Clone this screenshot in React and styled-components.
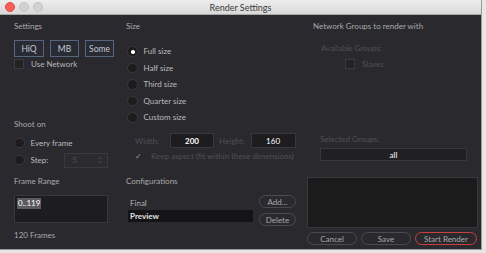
import React from 'react'
import styled, { createGlobalStyle } from 'styled-components'

const Global = createGlobalStyle`
  html, body { margin: 0; padding: 0; background: #e6e6e6; }
  body { font-family: Lato, "Liberation Sans", sans-serif; }
`

const Window = styled.div`
  width: 482px;
  height: 250px;
  background: #2a2a2e;
  border-right: 1px solid #9a9a9a;
  border-bottom: 1px solid #9a9a9a;
  box-sizing: border-box;
  display: flex;
  flex-direction: column;
  overflow: hidden;
`

const TitleBar = styled.div`
  height: 15px;
  flex: none;
  background: linear-gradient(#ededed, #d8d8d8);
  border-bottom: 1px solid #a9a9a9;
  box-sizing: border-box;
  display: flex;
  align-items: center;
  padding-left: 5px;
  position: relative;
`

const Light = styled.span`
  width: 8px;
  height: 8px;
  border-radius: 50%;
  margin-right: 4px;
  background: ${p => (p.red ? '#fb5f57' : '#d2d2d2')};
  border: 0.5px solid ${p => (p.red ? '#de4840' : '#c2c2c2')};
`

const Title = styled.div`
  position: absolute;
  left: 0;
  right: 0;
  text-align: center;
  font-size: 9px;
  color: #3c3c3c;
  line-height: 15px;
`

const Body = styled.div`
  display: flex;
  padding: 5px 0 0 14px;
  font-size: 8px;
  color: #b8b8b8;
`

const Column = styled.div`
  width: ${p => p.w}px;
  flex: none;
  display: flex;
  flex-direction: column;
`

const Label = styled.div`
  line-height: 12px;
  height: 12px;
  margin-top: ${p => p.mt || 0}px;
  margin-left: ${p => p.ml || 0}px;
  color: ${p => (p.dim ? '#505055' : '#a9a9a9')};
  white-space: nowrap;
`

const ToggleRow = styled.div`
  display: flex;
  gap: 6px;
  margin-top: 8px;
`

const Toggle = styled.div`
  width: ${p => p.w}px;
  height: 15px;
  border: 1px solid #58647f;
  background: #282b33;
  color: #c2c8d6;
  font-size: 8.5px;
  display: flex;
  align-items: center;
  justify-content: center;
`

const CheckRow = styled.div`
  display: flex;
  align-items: center;
  height: 10px;
  margin-top: ${p => p.mt || 0}px;
  margin-left: ${p => p.ml || 0}px;
  color: ${p => (p.dim ? '#505055' : '#b8b8b8')};
  white-space: nowrap;
`

const Box = styled.span`
  width: 8px;
  height: 8px;
  border: 1px solid #3c3c40;
  background: #222225;
  margin-right: 7px;
`

const RadioRow = styled.div`
  display: flex;
  align-items: center;
  height: ${p => p.h || 16.5}px;
  margin-left: ${p => p.ml || 0}px;
  margin-top: ${p => p.mt || 0}px;
  white-space: nowrap;
  color: #bcbcbc;
`

const Radio = styled.span`
  width: 10.5px;
  height: 10.5px;
  border-radius: 50%;
  background: #1c1c1e;
  border: 0.5px solid #3a3a3e;
  margin-right: 6px;
  position: relative;
  box-sizing: border-box;
  flex: none;
  &::after {
    content: '';
    display: ${p => (p.on ? 'block' : 'none')};
    position: absolute;
    left: 3.2px;
    top: 3.2px;
    width: 3.5px;
    height: 3.5px;
    border-radius: 50%;
    background: #fff;
  }
`

const Spin = styled.div`
  width: 44px;
  height: 15px;
  margin-left: 16px;
  background: #2c2c30;
  border: 1px solid #3a3a3e;
  box-sizing: border-box;
  display: flex;
  align-items: center;
  justify-content: space-between;
  padding: 0 4px 0 7px;
  color: #4c4c50;
`

const Field = styled.div`
  width: ${p => p.w}px;
  height: ${p => p.h}px;
  margin-top: ${p => p.mt || 0}px;
  margin-left: ${p => p.ml || 0}px;
  background: ${p => p.bg || '#1d1d1f'};
  border: 1px solid #38383c;
  box-sizing: border-box;
  color: #fff;
  display: flex;
  align-items: ${p => (p.top ? 'flex-start' : 'center')};
  justify-content: ${p => (p.center ? 'center' : 'flex-start')};
  padding: ${p => (p.top ? '2px 2px' : '0')};
  font-weight: ${p => (p.bold ? 700 : 400)};
`

const Selected = styled.span`
  background: #5b5b5f;
  color: #fff;
  padding: 0 1px;
  line-height: 11px;
`

const SizeRow = styled.div`
  display: flex;
  align-items: center;
  margin-top: 7.5px;
  margin-left: 9px;
  color: #505055;
  white-space: nowrap;
`

const Check = styled.span`
  width: 7px;
  margin-right: 9px;
  color: #9a9a9a;
  font-size: 8px;
`

const ConfigRow = styled.div`
  display: flex;
  margin-top: 8px;
  gap: 6px;
`

const List = styled.div`
  width: 125px;
  margin-left: 2px;
  padding-top: 2px;
  display: flex;
  flex-direction: column;
`

const ListItem = styled.div`
  height: ${p => (p.active ? 12 : 13)}px;
  line-height: ${p => (p.active ? 12 : 13)}px;
  padding-left: 2px;
  background: ${p => (p.active ? '#141416' : 'transparent')};
  color: ${p => (p.active ? '#e4e4e4' : '#b0b0b0')};
  font-weight: ${p => (p.active ? 700 : 400)};
`

const Stack = styled.div`
  display: flex;
  flex-direction: column;
  gap: 5px;
`

const Pill = styled.div`
  width: ${p => p.w}px;
  height: 13px;
  border-radius: 7px;
  border: 1px solid ${p => (p.danger ? '#c8413d' : '#4a4a4f')};
  box-sizing: border-box;
  display: flex;
  align-items: center;
  justify-content: center;
  color: #a8a8a8;
  font-size: 8px;
`

const Preview = styled.div`
  width: 171px;
  height: 51px;
  margin-top: 16px;
  background: #1b1b1c;
  border: 1px solid #38383c;
  box-sizing: border-box;
`

const ButtonRow = styled.div`
  display: flex;
  gap: 4px;
  margin-top: 4px;
`

export default function App() {
  return (
    <>
      <Global />
      <Window>
        <TitleBar>
          <Light red />
          <Light />
          <Light />
          <Title>Render Settings</Title>
        </TitleBar>
        <Body>
          <Column w={112}>
            <Label>Settings</Label>
            <ToggleRow>
              <Toggle w={28}>HiQ</Toggle>
              <Toggle w={27}>MB</Toggle>
              <Toggle w={27}>Some</Toggle>
            </ToggleRow>
            <CheckRow mt={2}>
              <Box />
              Use Network
            </CheckRow>
            <Label mt={49}>Shoot on</Label>
            <RadioRow h={10} mt={8} ml={0}>
              <Radio />
              Every frame
            </RadioRow>
            <RadioRow h={16} mt={4}>
              <Radio />
              Step:
              <Spin>
                5
                <svg width="6" height="8" viewBox="0 0 6 8">
                  <path d="M1 3 L3 1 L5 3 M1 5 L3 7 L5 5" stroke="#4c4c50" fill="none" strokeWidth="0.8" />
                </svg>
              </Spin>
            </RadioRow>
            <Label mt={7}>Frame Range</Label>
            <Field w={94} h={28} mt={8} top>
              <Selected>0..119</Selected>
            </Field>
            <Label mt={6}>120 Frames</Label>
          </Column>

          <Column w={181}>
            <Label>Size</Label>
            <RadioRow ml={1} mt={11}>
              <Radio on />
              Full size
            </RadioRow>
            <RadioRow ml={1}>
              <Radio />
              Half size
            </RadioRow>
            <RadioRow ml={1}>
              <Radio />
              Third size
            </RadioRow>
            <RadioRow ml={1}>
              <Radio />
              Quarter size
            </RadioRow>
            <RadioRow ml={1}>
              <Radio />
              Custom size
            </RadioRow>
            <SizeRow>
              Width:
              <Field w={44} h={15} ml={11} center bold>200</Field>
              <span style={{ marginLeft: 5 }}>Height:</span>
              <Field w={45} h={15} ml={6} center>160</Field>
            </SizeRow>
            <CheckRow mt={3} ml={9} dim>
              <Check>✓</Check>
              Keep aspect (fit within these dimensions)
            </CheckRow>
            <Label mt={14}>Configurations</Label>
            <ConfigRow>
              <List>
                <ListItem>Final</ListItem>
                <ListItem active>Preview</ListItem>
              </List>
              <Stack>
                <Pill w={37}>Add...</Pill>
                <Pill w={37}>Delete</Pill>
              </Stack>
            </ConfigRow>
          </Column>

          <Column w={171}>
            <Label ml={6}>Network Groups to render with</Label>
            <Label ml={14} mt={10} dim>Available Groups:</Label>
            <CheckRow ml={38} mt={5} dim>
              <Box />
              Slaves
            </CheckRow>
            <Label ml={13} mt={64} dim>Selected Groups:</Label>
            <Field w={147} h={13} ml={13} mt={3} center bg="#202023">all</Field>
            <Preview />
            <ButtonRow>
              <Pill w={50}>Cancel</Pill>
              <Pill w={50}>Save</Pill>
              <Pill w={62} danger>Start Render</Pill>
            </ButtonRow>
          </Column>
        </Body>
      </Window>
    </>
  )
}
